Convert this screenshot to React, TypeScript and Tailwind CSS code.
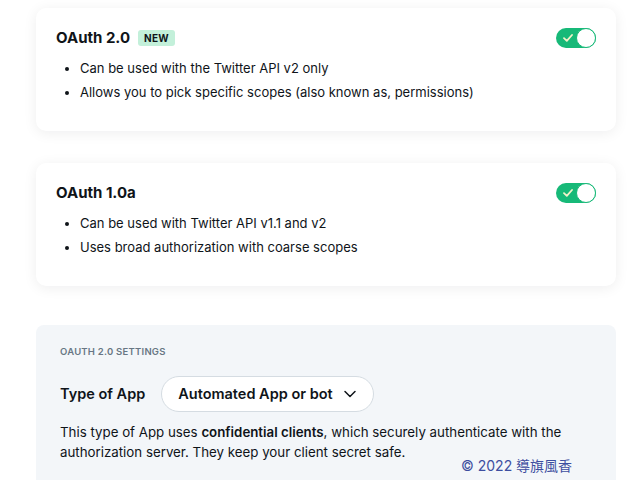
import React from "react";

const Toggle = () => (
  <div className="relative w-10 h-5 rounded-full bg-[#17b978] flex items-center">
    <svg className="absolute left-[7px] top-[6px]" width="10" height="8" viewBox="0 0 10 8">
      <path d="M1 4.2 L3.8 6.8 L9 1" fill="none" stroke="#f4f1c9" strokeWidth="1.8" strokeLinecap="round" strokeLinejoin="round" />
    </svg>
    <div className="absolute right-0 top-0 w-5 h-5 rounded-full bg-white border-[1.5px] border-[#17b978]" />
  </div>
);

type CardProps = {
  title: string;
  badge?: boolean;
  items: string[];
};

const AuthCard = ({ title, badge, items }: CardProps) => (
  <div className="bg-white rounded-[10px] shadow-[0_2px_14px_rgba(15,20,25,0.07)] px-5 pt-5 pb-[27px]">
    <div className="flex items-center justify-between h-5">
      <div className="flex items-center gap-2">
        <h3 className="text-[15px] font-bold text-[#0f1419]">{title}</h3>
        {badge && (
          <span className="bg-[#c3f0da] text-[#0f1419] text-[10px] font-bold px-[6px] py-[2px] rounded-[3px] leading-3 tracking-wide">
            NEW
          </span>
        )}
      </div>
      <Toggle />
    </div>
    <ul className="mt-2 pl-6 list-disc text-[13px] leading-6 text-[#0f1419] marker:text-[#0f1419]">
      {items.map((item) => (
        <li key={item}>{item}</li>
      ))}
    </ul>
  </div>
);

export default function App() {
  return (
    <div
      className="relative w-[640px] h-[480px] overflow-hidden bg-white"
      style={{ fontFamily: "Inter, 'Noto Sans CJK TC', sans-serif" }}
    >
      <div className="ml-9 w-[580px] pt-2 flex flex-col">
        <AuthCard
          title="OAuth 2.0"
          badge
          items={[
            "Can be used with the Twitter API v2 only",
            "Allows you to pick specific scopes (also known as, permissions)",
          ]}
        />
        <div className="mt-8">
          <AuthCard
            title="OAuth 1.0a"
            items={[
              "Can be used with Twitter API v1.1 and v2",
              "Uses broad authorization with coarse scopes",
            ]}
          />
        </div>
        <div className="mt-[39px] bg-[#f3f6f9] rounded-t-[8px] px-6 pt-[21px] pb-10">
          <div className="text-[9.5px] font-semibold text-[#687684] tracking-wide leading-3">
            OAUTH 2.0 SETTINGS
          </div>
          <div className="mt-[18px] flex items-center gap-4">
            <span className="text-[14.5px] font-semibold text-[#0f1419]">Type of App</span>
            <div className="w-[213px] h-[36px] bg-white border border-[#d5dce2] rounded-full flex items-center pl-4 pr-[16px] justify-between">
              <span className="text-[14.5px] font-semibold text-[#0f1419]">Automated App or bot</span>
              <svg width="14" height="8" viewBox="0 0 14 8">
                <path d="M2 1.5 L7 6.5 L12 1.5" fill="none" stroke="#0f1419" strokeWidth="1.5" strokeLinecap="round" strokeLinejoin="round" />
              </svg>
            </div>
          </div>
          <p className="mt-[10px] text-[13.3px] leading-5 text-[#0f1419]">
            This type of App uses <span className="font-semibold">confidential clients</span>, which securely
            authenticate with the authorization server. They keep your client secret safe.
          </p>
        </div>
      </div>
      <div className="absolute left-[461px] top-[455px] text-[14px] text-[#3d4ea0]">© 2022 導旗風香</div>
    </div>
  );
}
